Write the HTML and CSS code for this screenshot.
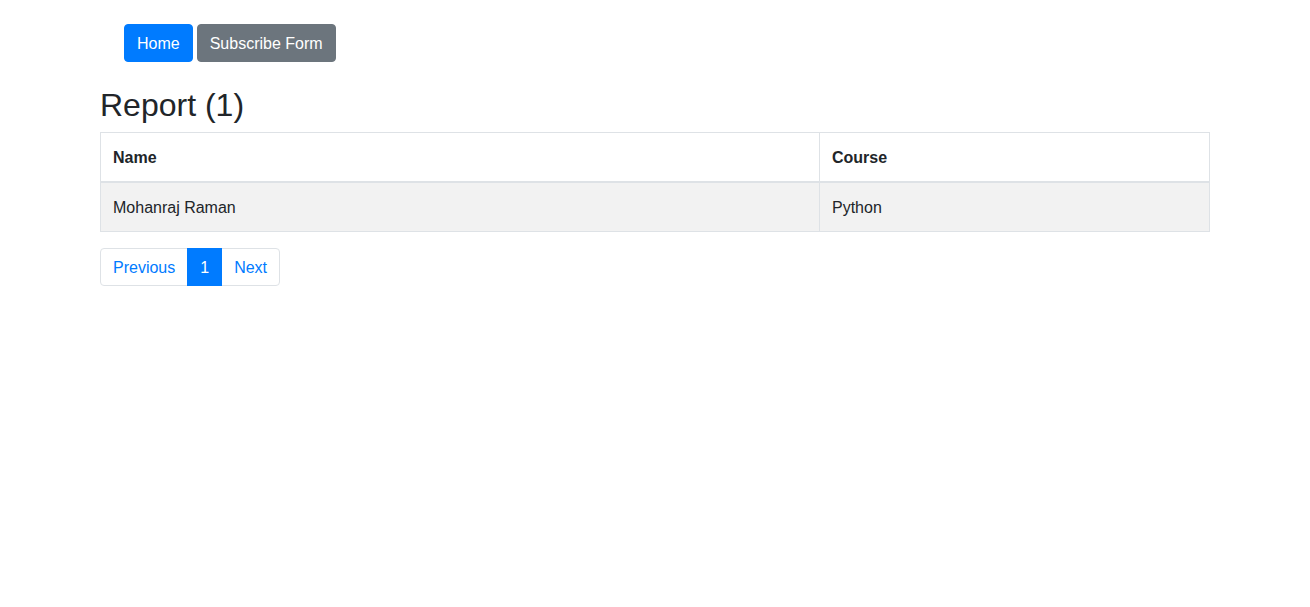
FILE: index.html
```html
<!DOCTYPE html>
<html lang="en">
<head>
<meta charset="utf-8">
<title>Report</title>
<link rel="stylesheet" href="styles.css">
</head>
<body>
<div class="container">
  <nav class="topnav">
    <a class="btn btn-primary" href="#">Home</a>
    <a class="btn btn-secondary" href="#">Subscribe Form</a>
  </nav>
  <h2 class="title">Report (1)</h2>
  <table class="table">
    <thead>
      <tr><th class="col-name">Name</th><th>Course</th></tr>
    </thead>
    <tbody>
      <tr><td>Mohanraj Raman</td><td>Python</td></tr>
    </tbody>
  </table>
  <ul class="pagination">
    <li class="page-item"><a class="page-link" href="#">Previous</a></li>
    <li class="page-item active"><a class="page-link" href="#">1</a></li>
    <li class="page-item"><a class="page-link" href="#">Next</a></li>
  </ul>
</div>
</body>
</html>
```
FILE: styles.css
```css
* { box-sizing: border-box; }
html, body { margin: 0; padding: 0; }
body {
  font-family: "Liberation Sans", Arial, sans-serif;
  font-size: 16px;
  line-height: 1.5;
  color: #212529;
  background: #fff;
}
.container {
  width: 1110px;
  margin: 0 auto;
}
.topnav {
  padding: 24px 0 0 24px;
  display: flex;
  gap: 4px;
}
.btn {
  display: inline-block;
  padding: 7px 12px 5px;
  border: 1px solid transparent;
  border-radius: 4px;
  line-height: 24px;
  font-size: 16px;
  color: #fff;
  text-decoration: none;
}
.btn-primary { background: #007bff; border-color: #007bff; }
.btn-secondary { background: #6c757d; border-color: #6c757d; }
.title {
  font-size: 32px;
  font-weight: 500;
  line-height: 1.2;
  margin: 24px 0 8px;
}
.table {
  width: 100%;
  border-collapse: collapse;
  margin-bottom: 16px;
  border: 1px solid #dee2e6;
}
.table th, .table td {
  padding: 13px 12px 11px;
  border: 1px solid #dee2e6;
  text-align: left;
  vertical-align: top;
  line-height: 24px;
}
.table th { font-weight: 700; border-bottom-width: 2px; }
.table .col-name { width: 719px; }
.table tbody tr:nth-child(odd) { background: #f2f2f2; }
.pagination {
  display: flex;
  list-style: none;
  margin: 0;
  padding: 0;
}
.page-link {
  display: block;
  padding: 9px 12px 7px;
  line-height: 20px;
  color: #007bff;
  text-decoration: none;
  border: 1px solid #dee2e6;
  margin-left: -1px;
  background: #fff;
}
.page-item:first-child .page-link { margin-left: 0; border-radius: 4px 0 0 4px; }
.page-item:last-child .page-link { border-radius: 0 4px 4px 0; }
.page-item.active .page-link {
  background: #007bff;
  border-color: #007bff;
  color: #fff;
  position: relative;
  z-index: 1;
}
```
